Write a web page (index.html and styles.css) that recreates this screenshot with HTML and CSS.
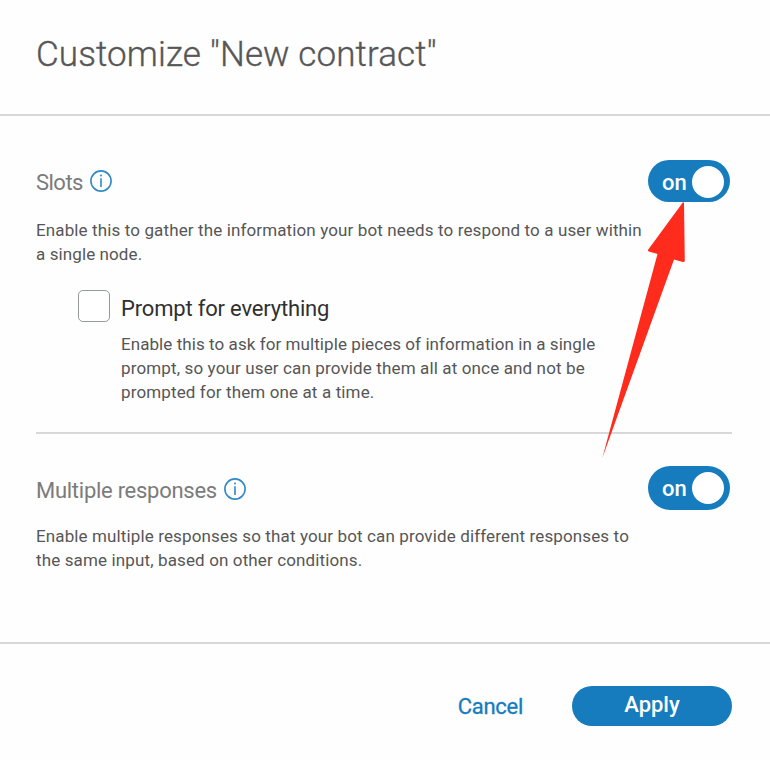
FILE: index.html
```html
<!DOCTYPE html>
<html lang="en">
<head>
<meta charset="utf-8">
<title>Customize node</title>
<link rel="stylesheet" href="styles.css">
</head>
<body>
<main class="dialog">
  <header class="dialog-header"><h1 class="title">Customize "New contract"</h1></header>
  <div class="dialog-body">
    <section class="setting slots">
      <div class="setting-head">
        <h2 class="setting-name"><span class="name-slots">Slots</span>
          <svg class="info" viewBox="0 0 22 22"><circle cx="11" cy="11" r="10.1"/><path d="M11 8.2V17"/><circle class="dot" cx="11" cy="5.6" r="1"/></svg></h2>
        <div class="toggle"><span class="toggle-text">on</span><span class="knob"></span></div>
      </div>
      <p class="description"><span class="line l1">Enable this to gather the information your bot needs to respond to a user within</span> <span class="line l2">a single node.</span></p>
      <div class="option">
        <span class="checkbox"></span>
        <div class="option-text">
          <h3 class="option-name">Prompt for everything</h3>
          <p class="description option-description"><span class="line l3">Enable this to ask for multiple pieces of information in a single</span> <span class="line l4">prompt, so your user can provide them all at once and not be</span> <span class="line l5">prompted for them one at a time.</span></p>
        </div>
      </div>
    </section>
    <section class="setting responses">
      <div class="setting-head">
        <h2 class="setting-name"><span class="name-responses">Multiple responses</span>
          <svg class="info" viewBox="0 0 22 22"><circle cx="11" cy="11" r="10.1"/><path d="M11 8.2V17"/><circle class="dot" cx="11" cy="5.6" r="1"/></svg></h2>
        <div class="toggle toggle-tall"><span class="toggle-text">on</span><span class="knob"></span></div>
      </div>
      <p class="description"><span class="line l6">Enable multiple responses so that your bot can provide different responses to</span> <span class="line l7">the same input, based on other conditions.</span></p>
    </section>
  </div>
  <footer class="dialog-footer">
    <a class="cancel">Cancel</a>
    <button class="apply" type="button">Apply</button>
  </footer>
  <svg class="arrow" viewBox="0 0 90 260"><path d="M82.8 2.5Q83.9 1.5 84 3.5L84.8 60.5Q84.5 62.5 82.8 62L74 59.5L2.3 258L57.5 54L48.8 51.5Q47.3 51 48.3 49.5Z"/></svg>
</main>
</body>
</html>
```

FILE: styles.css
```css
* { box-sizing: border-box; }
body { margin: 0; background: #fff; font-family: Roboto, "Liberation Sans", sans-serif; color: #565656; }
h1, h2, h3, p { margin: 0; font-weight: 400; }
.dialog { position: relative; width: 770px; height: 760px; display: flex; flex-direction: column; overflow: hidden; background: #fefefe; }
.dialog-header { height: 116px; padding: 34px 36px 0; border-bottom: 2px solid #d8d8d8; }
.title { font-size: 35px; line-height: 42px; font-weight: 300; letter-spacing: 0.12px; white-space: nowrap; -webkit-text-stroke: 0.35px #565656; }
.dialog-body { height: 526px; padding: 0 38px 0 36px; }
.slots { height: 318px; padding-top: 44px; border-bottom: 2px solid #d8d8d8; }
.responses { padding-top: 32px; }
.setting-head { display: flex; justify-content: space-between; height: 42px; margin-right: 2px; }
.responses .setting-head { height: 44px; }
.setting-name { display: flex; gap: 7px; font-size: 22px; line-height: 46px; color: #7b7b7b; white-space: nowrap; }
.responses .setting-name { line-height: 49px; }
.name-slots { letter-spacing: -0.52px; }
.name-responses { letter-spacing: -0.27px; }
.info { width: 22px; height: 22px; margin-top: 10px; fill: none; stroke: #3089c5; stroke-width: 1.6; }
.responses .info { margin-top: 12px; }
.info .dot { fill: #3089c5; stroke: none; }
.toggle { display: flex; align-items: center; justify-content: space-between; width: 82px; height: 42px; padding: 2px 6px 0 14px; border-radius: 22px; background: #167cbd; }
.toggle-tall { height: 44px; padding-top: 0; }
.toggle-text { padding-top: 2px; font-size: 22px; line-height: 32px; font-weight: 500; color: #fff; }
.knob { width: 32px; height: 32px; border-radius: 50%; background: #fff; }
.description { margin-top: 16px; font-size: 17px; line-height: 24px; white-space: nowrap; }
.responses .description { margin-top: 14px; }
.line { display: block; }
.l1 { letter-spacing: 0.125px; }
.l2 { letter-spacing: 0.1px; }
.l3 { letter-spacing: 0.07px; }
.l4 { letter-spacing: 0.135px; }
.l5 { letter-spacing: 0.13px; }
.l6 { letter-spacing: 0.125px; }
.l7 { letter-spacing: 0.13px; }
.option { display: flex; gap: 11px; margin: 24px 0 0 42px; }
.checkbox { width: 32px; height: 32px; border: 1.5px solid #959a9a; border-radius: 5px; background: #fff; }
.option-name { font-size: 22px; line-height: 32px; margin-top: 3px; letter-spacing: -0.18px; color: #303030; white-space: nowrap; }
.option .option-description { margin-top: 7px; }
.dialog-footer { display: flex; justify-content: flex-end; align-items: flex-start; gap: 49px; height: 118px; padding: 42px 38px 0 0; border-top: 2px solid #d8d8d8; }
.cancel { margin-top: 1px; font-size: 22px; line-height: 40px; letter-spacing: -0.3px; color: #167cbd; -webkit-text-stroke: 0.3px #167cbd; }
.apply { width: 160px; height: 40px; padding: 0 0 4px; border: 0; border-radius: 20px; background: #167cbd; color: #fff; font: 500 22px Roboto, "Liberation Sans", sans-serif; }
.arrow { position: absolute; left: 600px; top: 200px; width: 90px; height: 260px; fill: #ff2b1c; }
```
